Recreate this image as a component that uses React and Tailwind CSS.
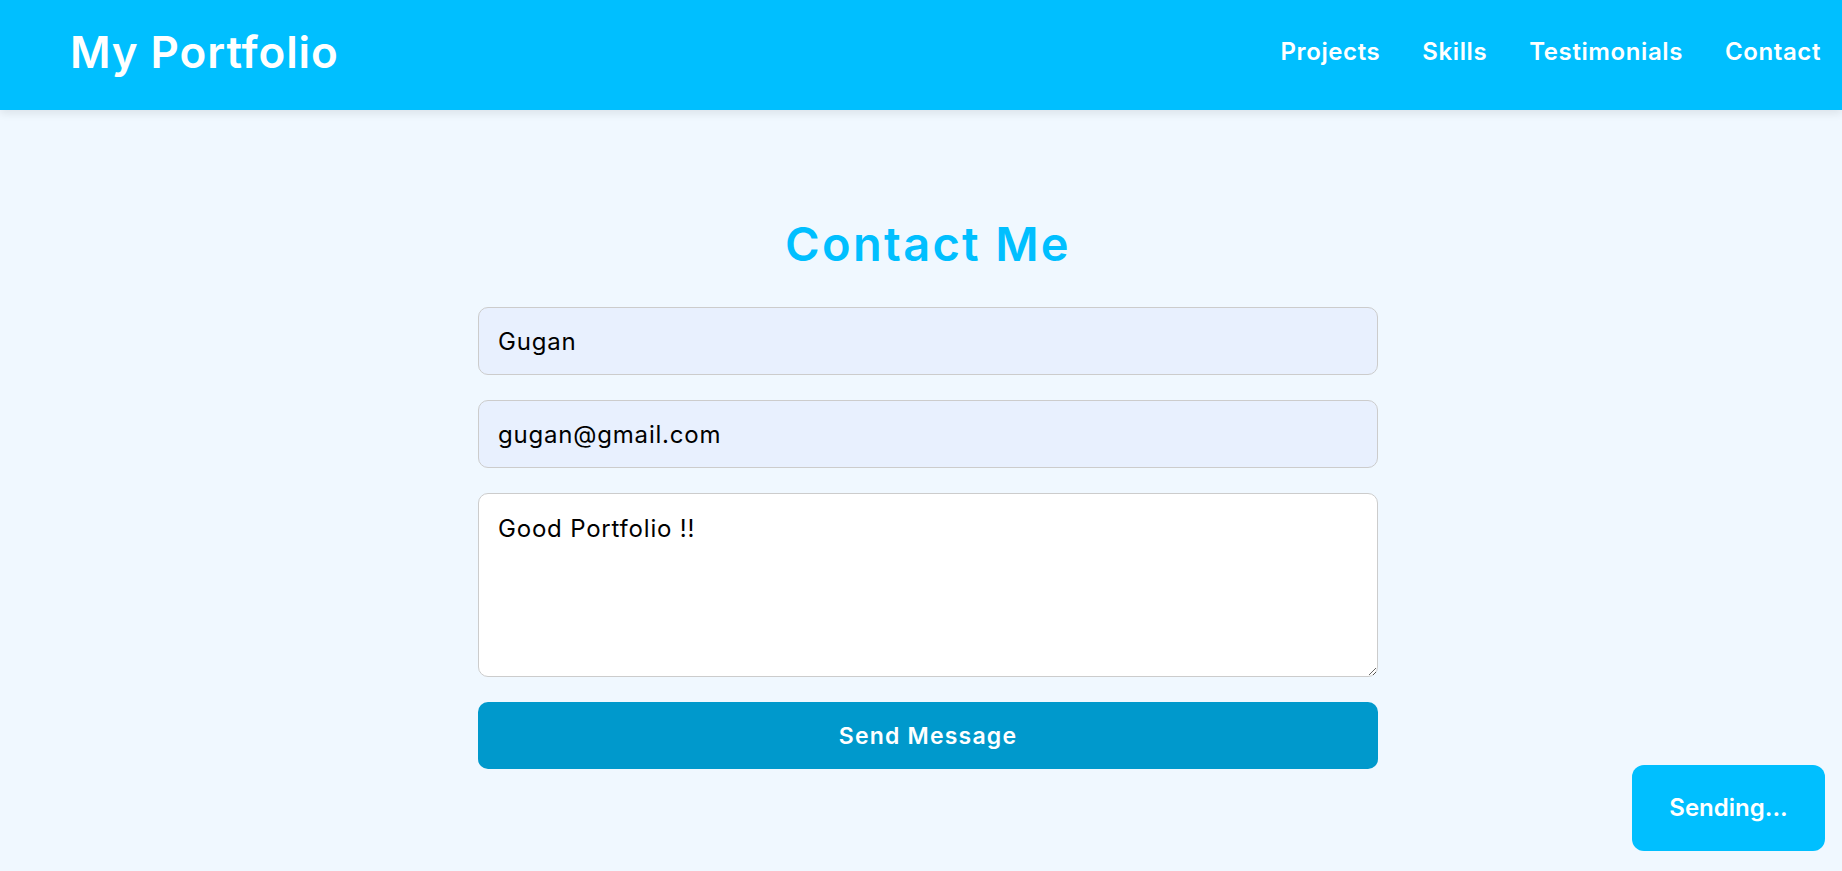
import React from 'react';

const font = { fontFamily: 'Inter, "Noto Sans", sans-serif' };

export default function App() {
  return (
    <div className="min-h-screen bg-[#f0f8ff]" style={font}>
      {/* Header */}
      <header className="h-[110px] bg-[#00bfff] flex items-center justify-between pl-[70px] pr-[21px] pb-[7px] shadow-[0_4px_8px_rgba(0,0,0,0.08)]">
        <h1 className="text-[44px] font-semibold text-white leading-none tracking-[0.9px]">My Portfolio</h1>
        <nav className="flex items-center gap-[42px] text-[24px] font-semibold text-white tracking-[0.6px]">
          <a href="#projects">Projects</a>
          <a href="#skills">Skills</a>
          <a href="#testimonials">Testimonials</a>
          <a href="#contact">Contact</a>
        </nav>
      </header>

      {/* Contact form */}
      <section id="contact" className="flex justify-center pl-[14px] pt-[106px]">
        <div className="w-[900px] flex flex-col">
          <h2 className="text-[47px] leading-[1.2] font-semibold text-[#00bfff] text-center tracking-[2.3px] mb-[35px]">Contact Me</h2>
          <form className="flex flex-col gap-[25px]" onSubmit={(e) => e.preventDefault()}>
            <input
              type="text"
              defaultValue="Gugan"
              className="h-[68px] px-[19px] text-[24px] tracking-[0.8px] text-black bg-[#e8f0fe] border border-[#cccccc] rounded-[10px] outline-none"
            />
            <input
              type="email"
              defaultValue="gugan@gmail.com"
              className="h-[68px] px-[19px] text-[24px] tracking-[0.8px] text-black bg-[#e8f0fe] border border-[#cccccc] rounded-[10px] outline-none"
            />
            <textarea
              defaultValue="Good Portfolio !!"
              className="h-[184px] px-[19px] py-[17px] text-[24px] tracking-[0.8px] text-black bg-white border border-[#cccccc] rounded-[10px] outline-none"
            />
            <button type="submit" className="h-[67px] rounded-[10px] bg-[#0099cc] text-white text-[23px] font-semibold tracking-[1.2px]">
              Send Message
            </button>
          </form>
        </div>
      </section>

      {/* Toast */}
      <div className="fixed bottom-[20px] right-[17px] w-[193px] h-[86px] rounded-[12px] bg-[#00bfff] flex items-center justify-center text-white text-[24px] font-semibold">
        Sending...
      </div>
    </div>
  );
}
